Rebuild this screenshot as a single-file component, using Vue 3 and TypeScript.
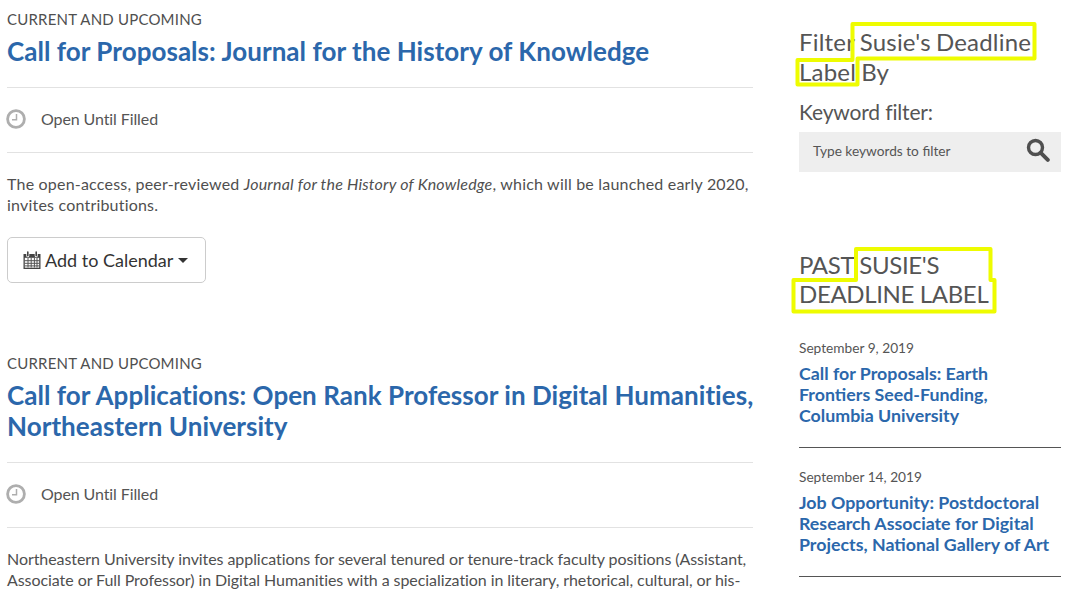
<script setup lang="ts">
interface Past { date: string; title: string[] }
const past: Past[] = [
  { date: 'September 9, 2019', title: ['Call for Proposals: Earth', 'Frontiers Seed-Funding,', 'Columbia University'] },
  { date: 'September 14, 2019', title: ['Job Opportunity: Postdoctoral', 'Research Associate for Digital', 'Projects, National Gallery of Art'] },
]
</script>

<template>
  <div class="page">
    <main class="main">
      <article class="post first">
        <div class="kicker">CURRENT AND UPCOMING</div>
        <h2 class="title">Call for Proposals: Journal for the History of Knowledge</h2>
        <div class="meta">
          <svg class="clock" viewBox="0 0 20 20" width="20" height="20"><circle cx="10" cy="10" r="8.4" fill="none" stroke="#aeaeae" stroke-width="2.8"/><path d="M10.5 5v5.8H6" fill="none" stroke="#aeaeae" stroke-width="1.5"/></svg>
          <span>Open Until Filled</span>
        </div>
        <p class="body">The open-access, peer-reviewed <em>Journal for the History of Knowledge</em>, which will be launched early 2020,<br>invites contributions.</p>
        <button class="cal" type="button">
          <svg viewBox="0 0 18 18" width="18" height="18"><path d="M.5 3h17v15H.5z" fill="#444"/><path d="M1.8 6.8h14.4v9.9H1.8z" fill="#fff"/><path d="M1.5 9.7h15M1.5 12.3h15M1.5 14.9h15M5 6.5v10M8.2 6.5v10M11.4 6.5v10M14 6.5v10" stroke="#555" stroke-width="1"/><path d="M4.8 1v3.8M13.2 1v3.8" stroke="#fff" stroke-width="3" stroke-linecap="round"/><path d="M4.8 1v3.8M13.2 1v3.8" stroke="#444" stroke-width="1.6" stroke-linecap="round"/></svg>
          <span>Add to Calendar</span>
          <i class="caret"></i>
        </button>
      </article>
      <article class="post second">
        <div class="kicker">CURRENT AND UPCOMING</div>
        <h2 class="title">Call for Applications: Open Rank Professor in Digital Humanities,<br>Northeastern University</h2>
        <div class="meta">
          <svg class="clock" viewBox="0 0 20 20" width="20" height="20"><circle cx="10" cy="10" r="8.4" fill="none" stroke="#aeaeae" stroke-width="2.8"/><path d="M10.5 5v5.8H6" fill="none" stroke="#aeaeae" stroke-width="1.5"/></svg>
          <span>Open Until Filled</span>
        </div>
        <p class="body">Northeastern University invites applications for several tenured or tenure-track faculty positions (Assistant,<br>Associate or Full Professor) in Digital Humanities with a specialization in literary, rhetorical, cultural, or his-</p>
      </article>
    </main>
    <aside class="side">
      <h3 class="filter">Filter Susie's Deadline<br>Label By</h3>
      <label class="kw">Keyword filter:</label>
      <div class="search">
        <span>Type keywords to filter</span>
        <svg viewBox="0 0 24 24" width="24" height="24"><circle cx="9.5" cy="9.5" r="7" fill="none" stroke="#4f4f4f" stroke-width="3.4"/><path d="M14.8 14.8l7 7" stroke="#4f4f4f" stroke-width="4" stroke-linecap="round"/></svg>
      </div>
      <h3 class="past">PAST SUSIE'S<br>DEADLINE LABEL</h3>
      <div v-for="p in past" :key="p.date" class="item">
        <div class="date">{{ p.date }}</div>
        <a class="link"><template v-for="l in p.title" :key="l">{{ l }}<br></template></a>
      </div>
    </aside>
    <svg class="marks" width="1072" height="594" viewBox="0 0 1072 594">
      <path d="M852.5 24H1034.5V58.5H857.5V84.5H797.5V60H852.5Z" fill="none" stroke="#eefc00" stroke-width="4" stroke-linejoin="round"/>
      <path d="M856 249H990.5V280H994.5V311.5H793.5V280H856Z" fill="none" stroke="#eefc00" stroke-width="4" stroke-linejoin="round"/>
    </svg>
  </div>
</template>

<style>
html, body { margin: 0; background: #fff; }
</style>

<style scoped>
.page {
  position: relative;
  width: 1072px;
  height: 594px;
  overflow: hidden;
  display: flex;
  gap: 46px;
  padding: 0 11px 0 7px;
  box-sizing: border-box;
  font-family: Lato, "Open Sans", sans-serif;
  color: #555;
}
.main { width: 746px; flex: none; }
.side { width: 262px; flex: none; }
.post.first { padding-top: 9px; }
.post.second { margin-top: 70px; }
.kicker { font-size: 15px; line-height: 20px; letter-spacing: .2px; color: #4f4f4f; }
.title {
  margin: 0;
  padding: 7px 0 20px;
  font-size: 26px;
  line-height: 31px;
  font-weight: 700;
  letter-spacing: .04px;
  white-space: nowrap;
  color: #2b67ab;
  border-bottom: 1px solid #e2e2e2;
}
.meta {
  display: flex;
  align-items: center;
  box-sizing: border-box;
  height: 65px;
  padding-bottom: 4px;
  gap: 15px;
  font-size: 16px;
  letter-spacing: -.1px;
  color: #555;
  border-bottom: 1px solid #e2e2e2;
}
.clock { flex: none; margin-left: -1px; margin-top: 2px; }
.body { margin: 20px 0 0; font-size: 16px; line-height: 21px; letter-spacing: .2px; white-space: nowrap; color: #4f4f4f; }
.second .body { letter-spacing: -.07px; }
.cal {
  display: flex;
  align-items: center;
  gap: 4px;
  margin-top: 22px;
  width: 199px;
  height: 46px;
  padding: 0 0 0 15px;
  background: #fff;
  border: 1px solid #ccc;
  border-radius: 5px;
  font: inherit;
  font-size: 18px;
  color: #333;
}
.caret {
  width: 0;
  height: 0;
  margin-left: 1px;
  border-left: 5px solid transparent;
  border-right: 5px solid transparent;
  border-top: 5px solid #333;
}
.filter, .past {
  margin: 0;
  font-weight: 400;
  font-size: 24px;
  color: #555;
}
.filter { padding-top: 27px; line-height: 30px; letter-spacing: .2px; word-spacing: -1.2px; }
.kw { display: block; margin-top: 10px; font-size: 21px; line-height: 30px; letter-spacing: -.15px; color: #555; }
.search {
  display: flex;
  align-items: center;
  justify-content: space-between;
  box-sizing: border-box;
  height: 40px;
  margin-top: 5px;
  padding: 0 11px 0 14px;
  background: #eee;
  font-size: 13.7px;
  color: #555;
}
.search span { margin-top: -3px; }
.search svg { margin-top: -5px; }
.past { margin-top: 78px; line-height: 29px; letter-spacing: -.35px; }
.item { padding: 19px 0 21px; border-bottom: 1px solid #555; }
.past + .item { padding-top: 30px; }
.date { font-size: 13.7px; line-height: 20px; color: #555; }
.link { display: block; margin-top: 5px; font-size: 17.8px; line-height: 21px; font-weight: 700; color: #2b67ab; }
.marks { position: absolute; left: 0; top: 0; pointer-events: none; }
</style>
